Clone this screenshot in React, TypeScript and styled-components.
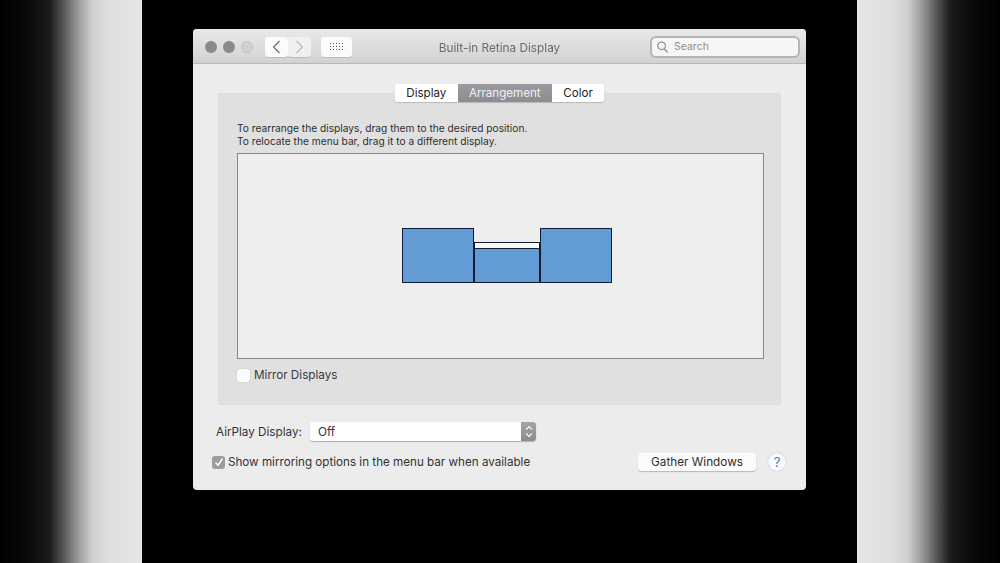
import styled, { createGlobalStyle } from "styled-components";

const GlobalStyle = createGlobalStyle`
  html, body {
    margin: 0;
    padding: 0;
    background: #000;
  }
  body {
    font-family: "Inter", "Liberation Sans", sans-serif;
  }
`;

export default function App() {
  return (
    <>
      <GlobalStyle />
      <Page>
        <SideStrip $side="left" />
        <Stage>
          <Window>
            <TitleBar>
              <Lights>
                <Light />
                <Light />
                <Light $off />
              </Lights>
              <NavGroup>
                <NavButton>
                  <svg width="9" height="14" viewBox="0 0 9 14">
                    <path d="M7.5 1 L1.5 7 L7.5 13" fill="none" stroke="#666" strokeWidth="1.1" />
                  </svg>
                </NavButton>
                <NavButton $disabled>
                  <svg width="9" height="14" viewBox="0 0 9 14">
                    <path d="M1.5 1 L7.5 7 L1.5 13" fill="none" stroke="#b8b8b8" strokeWidth="1.1" />
                  </svg>
                </NavButton>
              </NavGroup>
              <GridButton>
                <GridDots>
                  {Array.from({ length: 15 }).map((_, i) => (
                    <i key={i} />
                  ))}
                </GridDots>
              </GridButton>
              <Title>Built-in Retina Display</Title>
              <SearchBox>
                <svg width="11" height="12" viewBox="0 0 11 12">
                  <circle cx="4.6" cy="4.8" r="3.9" fill="none" stroke="#7a7a7a" strokeWidth="1" />
                  <path d="M7.4 7.8 L10.6 11.3" stroke="#7a7a7a" strokeWidth="1.1" />
                </svg>
                <span>Search</span>
              </SearchBox>
            </TitleBar>
            <Body>
              <PanelWrap>
                <Tabs>
                  <Tab>Display</Tab>
                  <Tab $active>Arrangement</Tab>
                  <Tab>Color</Tab>
                </Tabs>
                <Panel>
                  <Hint>
                    To rearrange the displays, drag them to the desired position.
                    <br />
                    To relocate the menu bar, drag it to a different display.
                  </Hint>
                  <Canvas>
                    <MonitorGroup>
                      <Monitor $width={72} $height={55} />
                      <Monitor $width={66} $height={41}>
                        <MenuBar />
                      </Monitor>
                      <Monitor $width={72} $height={55} />
                    </MonitorGroup>
                  </Canvas>
                  <MirrorRow>
                    <Check />
                    <span>Mirror Displays</span>
                  </MirrorRow>
                </Panel>
              </PanelWrap>
              <AirPlayRow>
                <Label>AirPlay Display:</Label>
                <Select>
                  <span>Off</span>
                  <Stepper>
                    <svg width="8" height="13" viewBox="0 0 8 13">
                      <path
                        d="M1 4.6 L4 1.6 L7 4.6 M1 8.4 L4 11.4 L7 8.4"
                        fill="none"
                        stroke="#fff"
                        strokeWidth="1.2"
                      />
                    </svg>
                  </Stepper>
                </Select>
              </AirPlayRow>
              <BottomRow>
                <CheckedBox>
                  <svg width="10" height="10" viewBox="0 0 10 10">
                    <path d="M1.5 5.5 L4 8.2 L8.5 1.5" fill="none" stroke="#fff" strokeWidth="1.5" />
                  </svg>
                </CheckedBox>
                <BottomLabel>Show mirroring options in the menu bar when available</BottomLabel>
                <GatherButton>Gather Windows</GatherButton>
                <HelpButton>?</HelpButton>
              </BottomRow>
            </Body>
          </Window>
        </Stage>
        <SideStrip $side="right" />
      </Page>
    </>
  );
}

const Page = styled.div`
  display: flex;
  width: 1000px;
  height: 563px;
  overflow: hidden;
  background: #000;
`;
const SideStrip = styled.div<{ $side: "left" | "right" }>`
  width: ${(p) => (p.$side === "left" ? "142px" : "143px")};
  height: 100%;
  flex: none;
  background: linear-gradient(
    ${(p) => (p.$side === "left" ? "to right" : "to left")},
    #000 0,
    #0a0a0a 30px,
    #1c1c1c 50px,
    #5a5a5a 64px,
    #9a9a9a 78px,
    #cfcfcf 92px,
    #e0e0e0 110px,
    #e5e5e5 142px
  );
`;
const Stage = styled.div`
  flex: 1;
  display: flex;
  justify-content: center;
  padding-top: 29px;
`;
const Window = styled.div`
  width: 613px;
  height: 461px;
  border-radius: 4px;
  background: #ececec;
  display: flex;
  flex-direction: column;
  filter: blur(0.35px);
`;
const TitleBar = styled.div`
  height: 35px;
  flex: none;
  box-sizing: border-box;
  position: relative;
  display: flex;
  align-items: center;
  padding: 1px 8px 0 12px;
  border-radius: 4px 4px 0 0;
  border-bottom: 1px solid #b9b9b9;
  background: linear-gradient(#e9e9e9, #d2d2d2);
`;
const Lights = styled.div`
  display: flex;
  gap: 6px;
  margin-right: 12px;
`;
const Light = styled.div<{ $off?: boolean }>`
  width: 12px;
  height: 12px;
  border-radius: 50%;
  background: ${(p) => (p.$off ? "#d0d0d0" : "#8a8a8a")};
  box-shadow: ${(p) => (p.$off ? "inset 0 0 0 1px #c4c4c4" : "none")};
`;
const NavGroup = styled.div`
  display: flex;
  margin-right: 10px;
`;
const NavButton = styled.div<{ $disabled?: boolean }>`
  width: 23px;
  height: 20px;
  display: flex;
  align-items: center;
  justify-content: center;
  border-radius: 3px;
  background: ${(p) => (p.$disabled ? "#f0f0f0" : "#fbfbfb")};
  box-shadow: 0 1px 0 #bcbcbc;
`;
const GridButton = styled.div`
  width: 31px;
  height: 20px;
  display: flex;
  align-items: center;
  justify-content: center;
  border-radius: 3px;
  background: #fbfbfb;
  box-shadow: 0 1px 0 #bcbcbc;
`;
const GridDots = styled.div`
  display: grid;
  grid-template-columns: repeat(5, 1.5px);
  grid-auto-rows: 1.5px;
  gap: 1.5px;
  i {
    background: #555;
  }
`;
const Title = styled.div`
  position: absolute;
  left: 0;
  right: 0;
  top: 11px;
  text-align: center;
  font-size: 11.8px;
  line-height: 16px;
  color: #6b6b6b;
  pointer-events: none;
`;
const SearchBox = styled.div`
  margin-left: auto;
  width: 146px;
  height: 18px;
  display: flex;
  align-items: center;
  gap: 6px;
  padding-left: 5px;
  box-sizing: border-box;
  border-radius: 4px;
  background: #f6f6f6;
  box-shadow: 0 0 0 2px #b4b4b4;
  font-size: 10.5px;
  color: #8e8e8e;
`;
const Body = styled.div`
  flex: 1;
  padding: 20px 25px 0 23px;
  display: flex;
  flex-direction: column;
`;
const PanelWrap = styled.div`
  position: relative;
  padding: 9px 0 0 2px;
`;
const Tabs = styled.div`
  position: absolute;
  z-index: 1;
  top: 0;
  left: 179px;
  display: flex;
  height: 18px;
  border-radius: 3px;
  background: #fff;
  box-shadow: 0 1px 1px #b8b8b8;
  overflow: hidden;
`;
const Tab = styled.div<{ $active?: boolean }>`
  display: flex;
  align-items: center;
  padding: 0 11.3px;
  font-size: 11.6px;
  color: ${(p) => (p.$active ? "#f1f1f1" : "#222")};
  background: ${(p) => (p.$active ? "linear-gradient(#9a9aa0, #8c8c92)" : "#fff")};
`;
const Panel = styled.div`
  width: 563px;
  height: 312px;
  box-sizing: border-box;
  padding: 29px 17px 0 19px;
  border-radius: 3px;
  background: #e0e0e0;
  box-shadow: inset 0 0 0 1px #dcdcdc;
`;
const Hint = styled.div`
  font-size: 10.2px;
  line-height: 13px;
  color: #2e2e2e;
`;
const Canvas = styled.div`
  width: 527px;
  height: 206px;
  margin-top: 5px;
  padding-left: 13px;
  box-sizing: border-box;
  display: flex;
  align-items: center;
  justify-content: center;
  background: #eeeeee;
  border: 1px solid #888888;
`;
const MonitorGroup = styled.div`
  display: flex;
  align-items: flex-end;
  margin-bottom: 1px;
`;
const Monitor = styled.div<{ $width: number; $height: number }>`
  width: ${(p) => p.$width}px;
  height: ${(p) => p.$height}px;
  box-sizing: border-box;
  background: #639bd5;
  border: 1px solid #0f1d36;
`;
const MenuBar = styled.div`
  height: 5px;
  background: #f8f8f8;
  border-bottom: 1px solid #0f1d36;
`;
const MirrorRow = styled.div`
  display: flex;
  align-items: center;
  gap: 4px;
  margin-top: 9px;
  font-size: 11.7px;
  color: #3a3a3a;
`;
const Check = styled.div`
  width: 13px;
  height: 13px;
  border-radius: 3px;
  background: #fbfbfb;
  box-shadow: 0 0 1px #9a9a9a;
`;
const AirPlayRow = styled.div`
  display: flex;
  align-items: center;
  margin-top: 17px;
`;
const Label = styled.div`
  font-size: 11.7px;
  color: #333;
  width: 94px;
`;
const Select = styled.div`
  width: 226px;
  height: 19px;
  display: flex;
  align-items: center;
  justify-content: space-between;
  padding-left: 8px;
  box-sizing: border-box;
  border-radius: 3px;
  overflow: hidden;
  background: #fff;
  box-shadow: 0 1px 1px #b0b0b0;
  font-size: 11.7px;
  color: #333;
`;
const Stepper = styled.div`
  width: 15px;
  height: 100%;
  display: flex;
  align-items: center;
  justify-content: center;
  background: linear-gradient(#a4a4a4, #8c8c8c);
`;
const BottomRow = styled.div`
  display: flex;
  align-items: center;
  margin-top: 12px;
  margin-left: -4px;
`;
const CheckedBox = styled.div`
  width: 13px;
  height: 13px;
  flex: none;
  display: flex;
  align-items: center;
  justify-content: center;
  border-radius: 3px;
  background: #9c9c9c;
`;
const BottomLabel = styled.div`
  margin-left: 3px;
  font-size: 11.65px;
  color: #333;
`;
const GatherButton = styled.div`
  margin-left: auto;
  width: 118px;
  height: 18px;
  display: flex;
  align-items: center;
  justify-content: center;
  border-radius: 3px;
  background: #fbfbfb;
  box-shadow: 0 1px 1px #b8b8b8;
  font-size: 11.75px;
  color: #2e2e2e;
`;
const HelpButton = styled.div`
  width: 18px;
  height: 18px;
  margin-left: 12px;
  margin-right: -5px;
  display: flex;
  align-items: center;
  justify-content: center;
  border-radius: 50%;
  background: #f8fbfd;
  box-shadow: 0 0 1px #999;
  font-size: 13px;
  color: #3f80c8;
`;
